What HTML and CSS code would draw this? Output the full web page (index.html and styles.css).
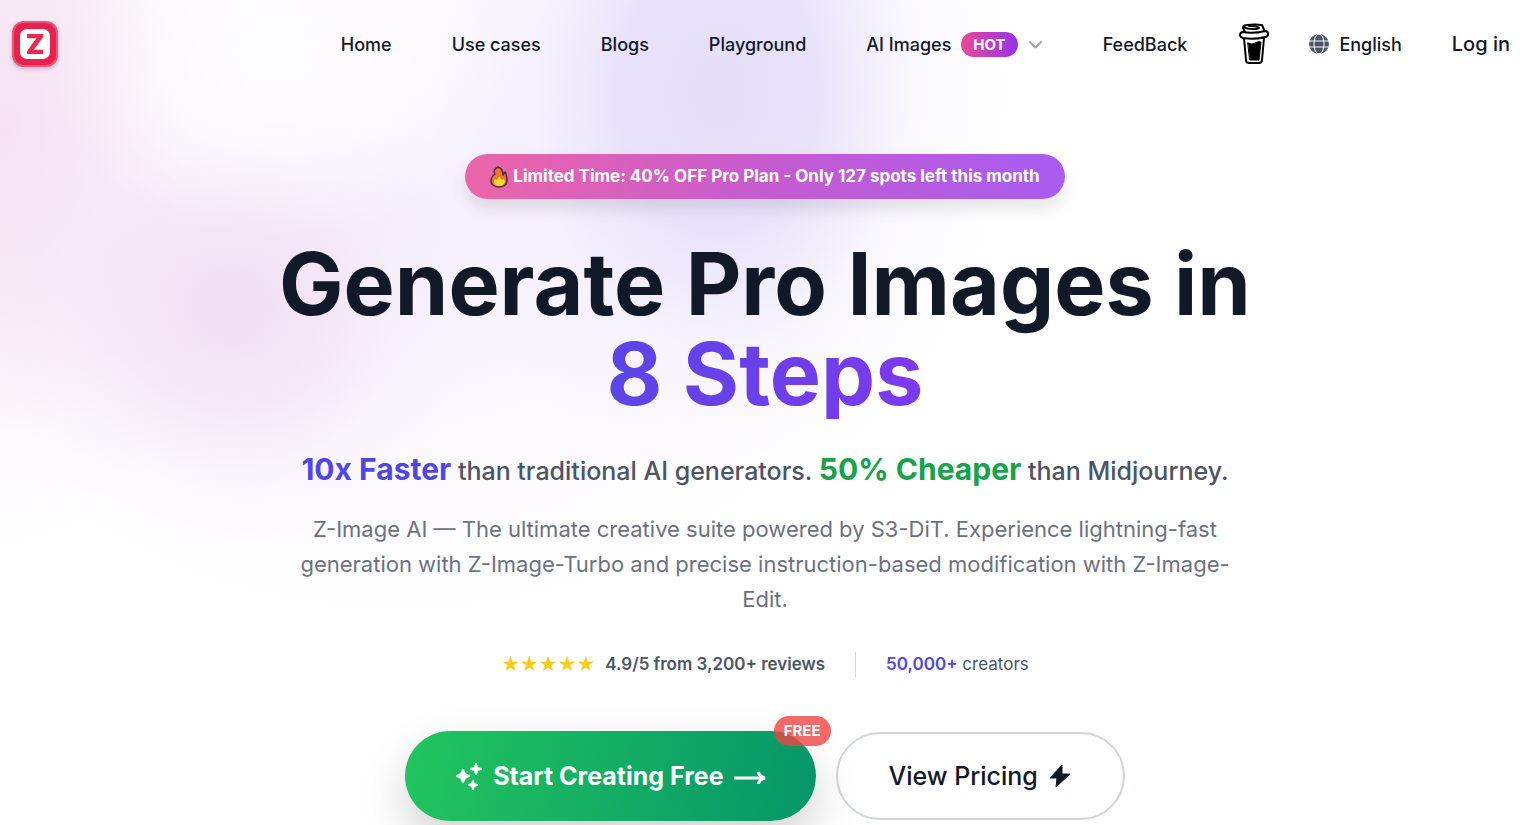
FILE: index.html
```
<!DOCTYPE html>
<html lang="en">
<head>
  <meta charset="UTF-8" />
  <meta name="viewport" content="width=device-width, initial-scale=1" />
  <title>Z-Image AI</title>
  <link rel="stylesheet" href="styles.css">
</head>
<body>
  <div class="page">
    <header class="header">
      <a href="#" class="logo" aria-label="Z-Image home">
        <svg width="46" height="46" viewBox="0 0 46 46">
          <rect x="0" y="0" width="46" height="46" rx="12" fill="#ee5475"/>
          <rect x="2" y="2" width="42" height="42" rx="10" fill="#e5214f"/>
          <rect x="8" y="8" width="30" height="30" rx="7" fill="#fff"/>
          <text x="23" y="33" text-anchor="middle" class="logo-letter">Z</text>
        </svg>
      </a>
      <nav class="nav">
        <a href="#">Home</a>
        <a href="#">Use cases</a>
        <a href="#">Blogs</a>
        <a href="#">Playground</a>
        <button type="button" class="nav-menu">
          AI Images
          <span class="hot">HOT</span>
          <svg width="15" height="15" viewBox="0 0 15 15" fill="none" stroke="#9ca3af" stroke-width="2" stroke-linecap="round" stroke-linejoin="round"><path d="M2 5l5.500 5.500L13 5"/></svg>
        </button>
        <a href="#">FeedBack</a>
      </nav>
      <div class="header-right">
        <a href="#" class="coffee" aria-label="Buy me a coffee">
          <svg width="30" height="42" viewBox="0 0 30 42" fill="none" stroke="#000" stroke-width="2" stroke-linejoin="round" stroke-linecap="round">
            <path d="M5 15l2 22q0 3 3 3h10q3 0 3-3l2-22z" fill="#fff"/>
            <path d="M9 20q4 2 7 0 3-2 6-1l-2 18H11z" fill="#000" stroke-width="1"/>
            <path d="M6 9L4 5q0-3 4-3 8-1 15 0l3 7" fill="#fff"/>
            <path d="M5 4q3 2 9 2 5 0 6-1 0-2-10-2" stroke-width="2"/>
            <path d="M3 9q12 2 23-1 3 0 3 3t-3 3q-11 3-22 1-3-1-3-3t2-3z" fill="#fff"/>
          </svg>
        </a>
        <button type="button" class="language">
          <svg width="20" height="20" viewBox="0 0 20 20"><circle cx="10" cy="10" r="10" fill="#4b5563"/><g fill="none" stroke="#fff" stroke-width="1"><ellipse cx="10" cy="10" rx="5" ry="10"/><path d="M0 7h20M0 13h20"/></g></svg>
          English
        </button>
        <a href="#" class="login">Log in</a>
      </div>
    </header>

    <main class="hero">
      <div class="promo">
        <svg width="18" height="22" viewBox="0 0 18 22">
          <path d="M8 1c-2 1-4 2-4 5l1 2c-3 2-4 4-4 7 0 4 4 6 8 6s8-2 8-6c0-3 0-6-2-9l-2 3C13 5 11 2 8 1z" fill="#f0742c" stroke="#4a2f3a" stroke-width="1.500" stroke-linejoin="round"/>
          <path d="M9 20c-3 0-5-2-5-4 0-1 0-2 1-3l2 1 2-4 3 4 2-1c2 4-1 7-5 7z" fill="#fdd835"/>
        </svg>
        Limited Time: 40% OFF Pro Plan - Only 127 spots left this month
      </div>
      <h1>Generate Pro Images in <span>8 Steps</span></h1>
      <p class="tagline"><strong class="faster">10x Faster</strong> than traditional AI generators. <strong class="cheaper">50% Cheaper</strong> than Midjourney.</p>
      <p class="description">Z-Image AI — The ultimate creative suite powered by S3-DiT. Experience lightning-fast generation with Z-Image-Turbo and precise instruction-based modification with Z-Image-Edit.</p>
      <div class="proof">
        <div class="rating">
          <span class="stars">★★★★★</span>
          <span>4.9/5 from 3,200+ reviews</span>
        </div>
        <div class="creators"><strong>50,000+</strong> creators</div>
      </div>
      <div class="actions">
        <button type="button" class="btn btn-start">
          <svg width="28" height="28" viewBox="0 0 28 28" fill="#fff" stroke="#fff" stroke-width="2" stroke-linejoin="round">
            <path d="M8 8l2 4 4 2-4 2-2 4-2-4-4-2 4-2zM21 2l1 4 4 1-4 1-1 4-1-4-4-1 4-1zM18 19l1 3 3 1-3 1-1 3-1-3-3-1 3-1z"/>
          </svg>
          Start Creating Free
          <svg width="32" height="16" viewBox="0 0 32 16" fill="none" stroke="#fff" stroke-width="3"><path d="M0 10h30M24 4q2 5 7 6-5 1-7 6"/></svg>
          <span class="free">FREE</span>
        </button>
        <button type="button" class="btn btn-pricing">
          View Pricing
          <svg width="24" height="24" viewBox="0 0 22 24" fill="#111827" stroke="#111827" stroke-linejoin="round"><path d="M13 1L1 14h7L7 23 21 10h-8z"/></svg>
        </button>
      </div>
    </main>
  </div>
</body>
</html>
```
FILE: styles.css
```
* {
  box-sizing: border-box;
}
body {
  margin: 0;
  font-family: Inter, "Liberation Sans", sans-serif;
  color: #111827;
  background: #fff;
}
.page {
  min-height: 100vh;
  overflow: hidden;
  background:
    radial-gradient(ellipse 230px 170px at 280px 70px, rgba(255, 255, 255, 0.7), rgba(255, 255, 255, 0.45) 50%, transparent),
    radial-gradient(ellipse 240px 240px at 230px 310px, rgba(239, 217, 241, 0.8), rgba(240, 219, 242, 0.6) 35%, rgba(245, 230, 248, 0.25) 70%, transparent),
    radial-gradient(ellipse 250px 420px at 0 130px, rgba(244, 220, 240, 0.85), rgba(244, 222, 241, 0.6) 40%, rgba(247, 230, 246, 0.2) 75%, transparent),
    radial-gradient(ellipse 290px 400px at 720px 90px, rgba(227, 220, 247, 0.95), rgba(228, 222, 249, 0.8) 35%, rgba(238, 233, 252, 0.35) 65%, transparent),
    radial-gradient(ellipse 500px 400px at 400px 220px, rgba(243, 235, 252, 0.8), rgba(246, 240, 253, 0.4) 60%, transparent),
    #fff;
}
a {
  color: inherit;
  text-decoration: none;
}
button {
  font: inherit;
  color: inherit;
  border: 0;
  background: none;
  padding: 0;
  cursor: pointer;
}
svg {
  display: block;
  flex-shrink: 0;
}
.header {
  display: flex;
  align-items: center;
  height: 88px;
  padding: 0 10px 0 12px;
  font-size: 18px;
  font-weight: 500;
}
.logo svg {
  filter: drop-shadow(0 2px 2px rgba(0, 0, 0, 0.2));
}
.logo-letter {
  font-size: 27px;
  font-weight: 900;
  fill: #e5294f;
}
.nav {
  display: flex;
  align-items: center;
  gap: 60px;
  margin-left: auto;
}
.nav-menu {
  display: flex;
  align-items: center;
  gap: 10px;
}
.hot {
  padding: 0 12px;
  border-radius: 20px;
  font-size: 15px;
  line-height: 25px;
  font-weight: 700;
  color: #fff;
  background: linear-gradient(90deg, #ec4899, #9333ea);
}
.header-right {
  display: flex;
  align-items: center;
  margin-left: 52px;
}
.coffee {
  margin-right: 40px;
}
.language {
  display: flex;
  align-items: center;
  gap: 10px;
  margin-right: 50px;
}
.login {
  font-size: 20px;
}
.hero {
  display: flex;
  flex-direction: column;
  align-items: center;
  max-width: 1050px;
  margin: 0 auto;
  padding: 66px 20px 4px 30px;
  text-align: center;
}
.promo {
  display: flex;
  align-items: center;
  gap: 5px;
  padding: 0 25px;
  border-radius: 30px;
  font-size: 17px;
  line-height: 45px;
  font-weight: 700;
  color: #fff;
  background: linear-gradient(90deg, #ec65a9, #c65bd0 50%, #a85cf0);
  box-shadow: 0 10px 16px rgba(0, 0, 0, 0.1);
}
h1 {
  margin: 40px 0 0;
  font-size: 86px;
  line-height: 90px;
  font-weight: 700;
}
h1 span {
  display: block;
  width: fit-content;
  margin: 0 auto;
  color: transparent;
  background: linear-gradient(90deg, #5b45e6, #7c3aed);
  background-clip: text;
}
.tagline {
  margin: 30px 0 0;
  font-size: 25px;
  line-height: 40px;
  font-weight: 500;
  color: #4b5563;
}
.tagline strong {
  font-size: 30px;
  font-weight: 700;
}
.tagline .faster {
  color: #4f46e5;
}
.tagline .cheaper {
  color: #16a34a;
}
.description {
  max-width: 960px;
  margin: 21px 0 0;
  font-size: 22px;
  line-height: 35px;
  color: #6b7280;
}
.proof {
  display: flex;
  align-items: center;
  margin-top: 35px;
  font-size: 17px;
  line-height: 25px;
  color: #4b5563;
}
.rating {
  display: flex;
  gap: 10px;
  padding-right: 30px;
  border-right: 1px solid #d1d5db;
  font-weight: 600;
}
.stars {
  font-family: "DejaVu Sans", sans-serif;
  font-size: 21px;
  color: #facc15;
}
.creators {
  padding-left: 30px;
}
.creators strong {
  font-weight: 600;
  color: #4f46e5;
}
.actions {
  display: flex;
  align-items: center;
  gap: 20px;
  margin-top: 54px;
}
.btn {
  display: flex;
  align-items: center;
  gap: 10px;
  border-radius: 45px;
  font-size: 25px;
}
.btn-start {
  position: relative;
  height: 90px;
  padding: 0 50px;
  font-weight: 700;
  color: #fff;
  background: linear-gradient(100deg, #22c55e, #059669);
  box-shadow: 0 20px 45px rgba(0, 0, 0, 0.18);
}
.btn-pricing {
  height: 88px;
  padding: 0 51px;
  border: 2px solid #d1d5db;
  font-weight: 500;
  background: #fff;
}
.free {
  position: absolute;
  top: -15px;
  right: -15px;
  padding: 0 10px;
  border-radius: 15px;
  font-size: 15px;
  line-height: 30px;
  background: rgba(239, 68, 68, 0.8);
}
```
